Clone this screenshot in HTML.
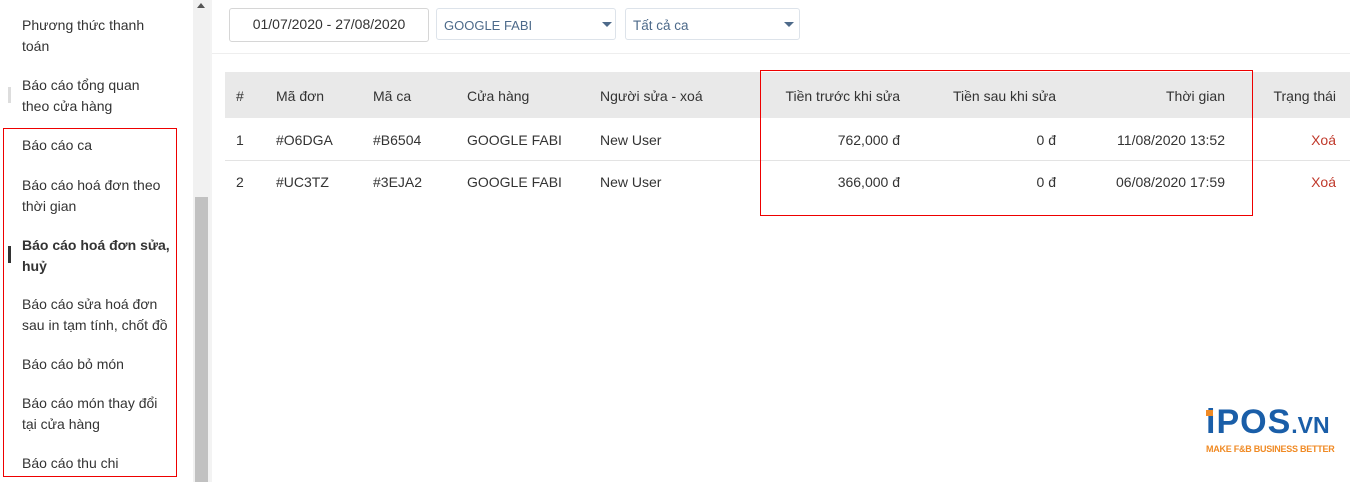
<!DOCTYPE html>
<html><head><meta charset="utf-8"><style>
body{margin:0;width:1350px;height:482px;overflow:hidden;background:#fff;font-family:"Liberation Sans",Arial,sans-serif;color:#333;position:relative}
.a{position:absolute;white-space:nowrap}
.side{font-size:14px;color:#333;line-height:21px}
.t{font-size:14px}
.r{text-align:right}
</style></head><body>
<div class="a side" style="left:22px;top:15px">Phương thức thanh<br>toán</div>
<div class="a" style="left:8px;top:87px;width:3px;height:16px;background:#ddd"></div>
<div class="a side" style="left:22px;top:75px">Báo cáo tổng quan<br>theo cửa hàng</div>
<div class="a side" style="left:22px;top:135px">Báo cáo ca</div>
<div class="a side" style="left:22px;top:175px">Báo cáo hoá đơn theo<br>thời gian</div>
<div class="a" style="left:8px;top:246px;width:3px;height:17px;background:#333"></div>
<div class="a side" style="left:22px;top:235px;font-weight:bold">Báo cáo hoá đơn sửa,<br>huỷ</div>
<div class="a side" style="left:22px;top:294px">Báo cáo sửa hoá đơn<br>sau in tạm tính, chốt đồ</div>
<div class="a side" style="left:22px;top:354px">Báo cáo bỏ món</div>
<div class="a side" style="left:22px;top:393px">Báo cáo món thay đổi<br>tại cửa hàng</div>
<div class="a side" style="left:22px;top:453px">Báo cáo thu chi</div>
<div class="a" style="left:3px;top:128px;width:172px;height:347px;border:1px solid #e00"></div>
<div class="a" style="left:193px;top:0;width:17px;height:482px;background:#f1f1f1"></div>
<div class="a" style="left:197px;top:3px;width:0;height:0;border-left:4px solid transparent;border-right:4px solid transparent;border-bottom:5px solid #555"></div>
<div class="a" style="left:195px;top:197px;width:13px;height:285px;background:#c1c1c1"></div>
<div class="a" style="left:210px;top:0;width:2px;height:482px;background:#f3f3f3"></div>
<div class="a" style="left:212px;top:53px;width:1138px;height:1px;background:#eee"></div>
<div class="a t" style="left:229px;top:8px;width:198px;height:32px;border:1px solid #d6d6d6;border-radius:3px;text-align:center;line-height:31px;color:#333">01/07/2020 - 27/08/2020</div>
<div class="a" style="left:436px;top:8px;width:180px;height:32px;border:1px solid #dde3ea;border-radius:3px;line-height:34px;color:#4d6a8a;box-sizing:border-box;padding-left:7px;font-size:13px">GOOGLE FABI</div>
<div class="a" style="left:602px;top:22px;border-left:5px solid transparent;border-right:5px solid transparent;border-top:5px solid #4d6a8a"></div>
<div class="a" style="left:625px;top:8px;width:175px;height:32px;border:1px solid #dde3ea;border-radius:3px;line-height:34px;color:#4d6a8a;box-sizing:border-box;padding-left:7px;font-size:13.5px">Tất cả ca</div>
<div class="a" style="left:784px;top:22px;border-left:5px solid transparent;border-right:5px solid transparent;border-top:5px solid #4d6a8a"></div>
<div class="a" style="left:225px;top:72px;width:1125px;height:46px;background:#e9e9e9"></div>
<div class="a" style="left:225px;top:160px;width:1125px;height:1px;background:#e3e3e3"></div>
<div class="a t" style="left:236px;top:88px">#</div>
<div class="a t" style="left:276px;top:88px">Mã đơn</div>
<div class="a t" style="left:373px;top:88px">Mã ca</div>
<div class="a t" style="left:467px;top:88px">Cửa hàng</div>
<div class="a t" style="left:600px;top:88px">Người sửa - xoá</div>
<div class="a t r" style="right:450px;top:88px">Tiền trước khi sửa</div>
<div class="a t r" style="right:294px;top:88px">Tiền sau khi sửa</div>
<div class="a t r" style="right:125px;top:88px">Thời gian</div>
<div class="a t r" style="right:14px;top:88px">Trạng thái</div>
<div class="a t" style="left:236px;top:132px">1</div>
<div class="a t" style="left:276px;top:132px">#O6DGA</div>
<div class="a t" style="left:373px;top:132px">#B6504</div>
<div class="a t" style="left:467px;top:132px">GOOGLE FABI</div>
<div class="a t" style="left:600px;top:132px">New User</div>
<div class="a t r" style="right:450px;top:132px">762,000 đ</div>
<div class="a t r" style="right:294px;top:132px">0 đ</div>
<div class="a t r" style="right:125px;top:132px">11/08/2020 13:52</div>
<div class="a t r" style="right:14px;top:132px;color:#c0392b">Xoá</div>
<div class="a t" style="left:236px;top:174px">2</div>
<div class="a t" style="left:276px;top:174px">#UC3TZ</div>
<div class="a t" style="left:373px;top:174px">#3EJA2</div>
<div class="a t" style="left:467px;top:174px">GOOGLE FABI</div>
<div class="a t" style="left:600px;top:174px">New User</div>
<div class="a t r" style="right:450px;top:174px">366,000 đ</div>
<div class="a t r" style="right:294px;top:174px">0 đ</div>
<div class="a t r" style="right:125px;top:174px">06/08/2020 17:59</div>
<div class="a t r" style="right:14px;top:174px;color:#c0392b">Xoá</div>
<div class="a" style="left:760px;top:70px;width:491px;height:144px;border:1px solid #e00"></div>
<div class="a" style="left:1206px;top:405px;font-size:34px;font-weight:bold;color:#1a5ea8;letter-spacing:1px;line-height:34px">iPOS<span style="font-size:23px;letter-spacing:0">.VN</span></div>
<div class="a" style="left:1206px;top:410px;width:7px;height:6px;background:#f08a24"></div>
<div class="a" style="left:1206px;top:444px;font-size:9px;font-weight:bold;color:#f08a24;letter-spacing:-0.25px">MAKE F&amp;B BUSINESS BETTER</div>
</body></html>
